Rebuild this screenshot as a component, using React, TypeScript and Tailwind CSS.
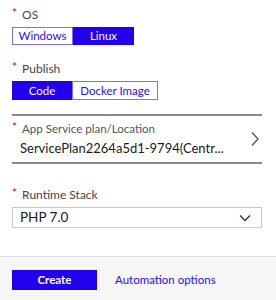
import React from "react";

const Req = () => <span className="text-[#e00000] text-[12px] mr-[5px] relative top-[-2px]">*</span>;

export default function App() {
  return (
    <div className="w-[276px] h-[300px] bg-white flex flex-col overflow-hidden" style={{ fontFamily: 'Lato, "Open Sans", sans-serif' }}>
      <div className="flex-1 pl-[12px] pr-[14px]">
        <div className="mt-[6px] h-[18px] flex items-center text-[12px] text-[#444]"><Req />OS</div>
        <div className="mt-[3px] flex">
          <div className="h-[18px] w-[61px] border border-[#7c72ee] flex items-center justify-center text-[11.5px] text-[#2a10e6]">Windows</div>
          <div className="h-[18px] w-[61px] bg-[#2200ee] flex items-center justify-center text-[11.5px] text-white">Linux</div>
        </div>
        <div className="mt-[15px] h-[18px] flex items-center text-[12px] text-[#444]"><Req />Publish</div>
        <div className="mt-[3px] flex">
          <div className="h-[19px] w-[60px] bg-[#2200ee] flex items-center justify-center text-[11.5px] text-white">Code</div>
          <div className="h-[19px] w-[86px] border border-[#7c72ee] flex items-center justify-center text-[11.5px] text-[#2a10e6]">Docker Image</div>
        </div>
        <div className="mt-[14px] border-t-[2px] border-b-[2px] border-[#8a8a8a] h-[50px] flex items-center justify-between">
          <div className="flex flex-col">
            <div className="flex items-center text-[11.5px] text-[#555] h-[16px]"><Req />App Service plan/Location</div>
            <div className="text-[13px] text-[#1a1a1a] leading-[20px] mt-[1px] ml-[8px]">ServicePlan2264a5d1-9794(Centr...</div>
          </div>
          <svg width="10" height="16" viewBox="0 0 10 16" className="mr-[2px]">
            <path d="M2 1.5 L8 8 L2 14.5" fill="none" stroke="#555" strokeWidth="1.3" />
          </svg>
        </div>
        <div className="mt-[22px] h-[18px] flex items-center text-[12px] text-[#444]"><Req />Runtime Stack</div>
        <div className="mt-[3px] h-[21px] border border-[#c8c8c8] flex items-center justify-between pl-[7px] pr-[10px]">
          <span className="text-[13.5px] text-[#1a1a1a]">PHP 7.0</span>
          <svg width="12" height="8" viewBox="0 0 12 8">
            <path d="M1 1.5 L6 6.5 L11 1.5" fill="none" stroke="#333" strokeWidth="1.3" />
          </svg>
        </div>
      </div>
      <div className="h-[44px] border-t border-[#dcdcdc] bg-[#f6f6f6] flex items-center pl-[12px]">
        <div className="w-[85px] h-[20px] bg-[#2200ee] flex items-center justify-center text-white text-[11.5px] font-bold mt-[2px]">Create</div>
        <div className="ml-[18px] text-[11.5px] text-[#2a10e6] mt-[2px]">Automation options</div>
      </div>
    </div>
  );
}
